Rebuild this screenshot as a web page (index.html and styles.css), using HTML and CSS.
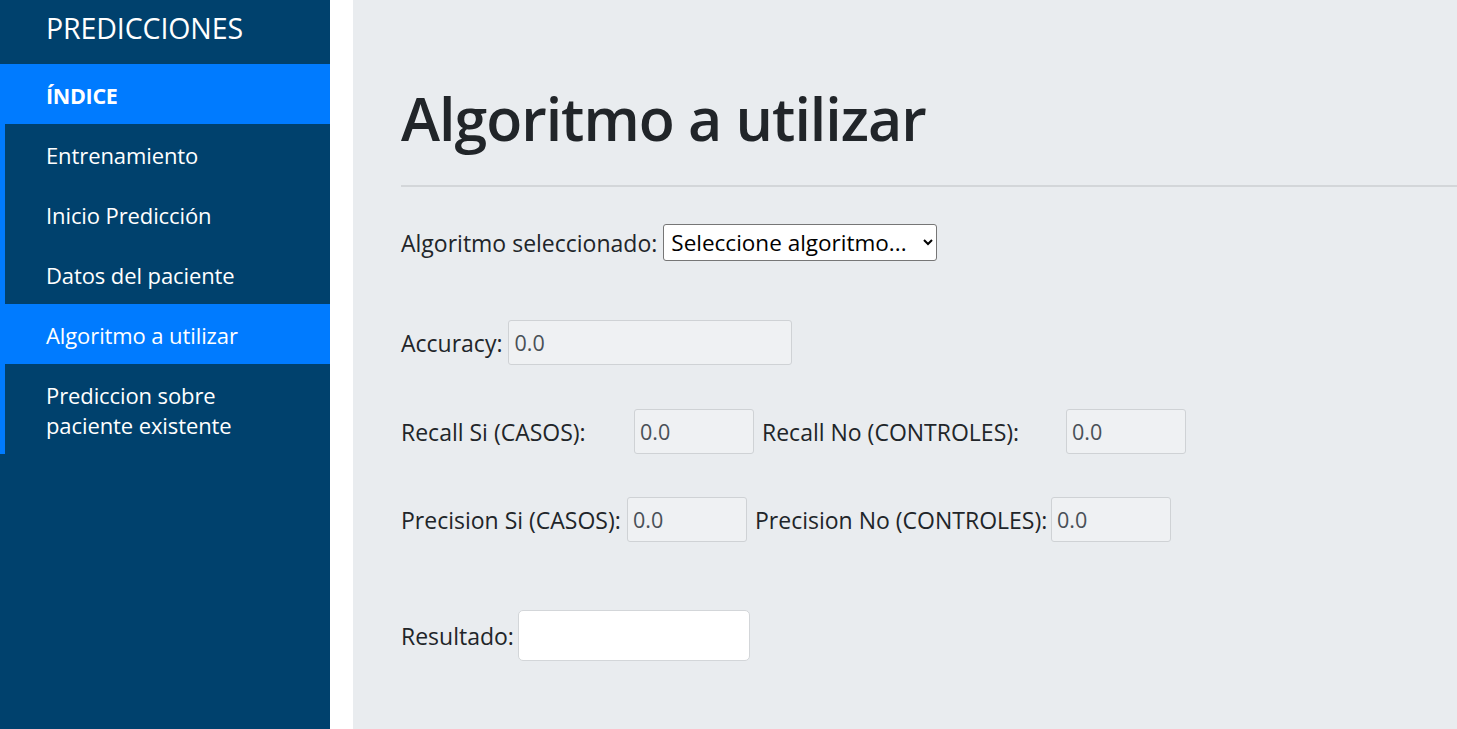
FILE: index.html
```html
<!DOCTYPE html>
<html lang="es">
<head>
<meta charset="utf-8">
<title>Algoritmo a utilizar</title>
<link rel="stylesheet" href="styles.css">
</head>
<body>
<div class="layout">
  <nav class="sidebar">
    <div class="brand">PREDICCIONES</div>
    <div class="nav-head">ÍNDICE</div>
    <ul class="nav-list">
      <li class="nav-item">Entrenamiento</li>
      <li class="nav-item">Inicio Predicción</li>
      <li class="nav-item">Datos del paciente</li>
      <li class="nav-item active">Algoritmo a utilizar</li>
      <li class="nav-item two-line">Prediccion sobre<br>paciente existente</li>
    </ul>
  </nav>
  <main class="main">
    <h1 class="title">Algoritmo a utilizar</h1>
    <hr class="rule">
    <div class="row row-select">
      <label class="lbl">Algoritmo seleccionado:</label>
      <select class="select"><option>Seleccione algoritmo...</option></select>
    </div>
    <div class="row row-acc">
      <label class="lbl">Accuracy:</label>
      <input class="field field-wide" value="0.0" readonly>
    </div>
    <div class="row row-recall">
      <label class="lbl lbl-rs">Recall Si (CASOS):</label>
      <input class="field field-sm" value="0.0" readonly>
      <label class="lbl lbl-rn">Recall No (CONTROLES):</label>
      <input class="field field-sm" value="0.0" readonly>
    </div>
    <div class="row row-prec">
      <label class="lbl lbl-ps">Precision Si (CASOS):</label>
      <input class="field field-sm" value="0.0" readonly>
      <label class="lbl lbl-pn">Precision No (CONTROLES):</label>
      <input class="field field-sm" value="0.0" readonly>
    </div>
    <div class="row row-res">
      <label class="lbl lbl-res">Resultado:</label>
      <input class="result">
    </div>
  </main>
</div>
</body>
</html>
```
FILE: styles.css
```css
* { box-sizing: border-box; }
html, body { margin: 0; padding: 0; height: 100%; overflow: hidden; }
body {
  font-family: "Open Sans", "Noto Sans", sans-serif;
  color: #212529;
  background: #ffffff;
}
.layout {
  display: flex;
  height: 729px;
  gap: 23px;
}
.sidebar {
  width: 330px;
  flex: 0 0 330px;
  background: #00416d;
  color: #ffffff;
}
.brand {
  height: 64px;
  padding-left: 46px;
  font-size: 28.5px;
  font-weight: 400;
  line-height: 56px;
  letter-spacing: -0.1px;
}
.nav-head {
  height: 60px;
  background: #007bff;
  padding-left: 46px;
  font-size: 21.5px;
  font-weight: 700;
  line-height: 64px;
  letter-spacing: -0.3px;
}
.nav-list {
  list-style: none;
  margin: 0;
  padding: 0;
  border-left: 5px solid #007bff;
}
.nav-item {
  height: 60px;
  padding-left: 41px;
  font-size: 22px;
  line-height: 63px;
  letter-spacing: -0.1px;
}
.nav-item.active {
  background: #007bff;
  margin-left: -5px;
  padding-left: 46px;
}
.nav-item.two-line {
  height: 90px;
  line-height: 30px;
  padding-top: 16px;
}
.main {
  flex: 1;
  background: #e9ecef;
  padding: 80px 0 0 48px;
  font-size: 23px;
}
.title {
  margin: 0;
  font-size: 59px;
  font-weight: 600;
  line-height: 76px;
  letter-spacing: -1px;
}
.rule {
  margin: 29px 0 0 0;
  border: 0;
  border-top: 2px solid #d3d6d9;
}
.row {
  display: flex;
  align-items: center;
}
.lbl { white-space: nowrap; margin-right: 6px; }
.row-select { margin-top: 37px; height: 37px; }
.select {
  width: 274px;
  height: 37px;
  font-family: inherit;
  font-size: 22.5px;
  color: #000;
  background: #fff;
  border: 1px solid #767676;
  border-radius: 3px;
  padding: 0 3px;
}
.field {
  height: 45px;
  font-family: inherit;
  font-size: 21.5px;
  color: #495057;
  background: #eff1f3;
  border: 1px solid #cfd2d5;
  border-radius: 3px;
  padding: 0 5px;
}
.field-wide { width: 284px; }
.field-sm { width: 120px; }
.row-acc { margin-top: 59px; }
.row-recall { margin-top: 44px; }
.row-prec { margin-top: 43px; }
.lbl-rs { width: 227px; }
.lbl-rn { width: 298px; margin-left: 8px; }
.lbl-ps { width: 220px; }
.lbl-pn { width: 290px; margin-left: 8px; }
.row-res { margin-top: 68px; }
.lbl-res { margin-right: 4px; }
.result {
  width: 232px;
  height: 51px;
  background: #fff;
  border: 1px solid #d3d6d9;
  border-radius: 5px;
  font-family: inherit;
  font-size: 20px;
}
```
